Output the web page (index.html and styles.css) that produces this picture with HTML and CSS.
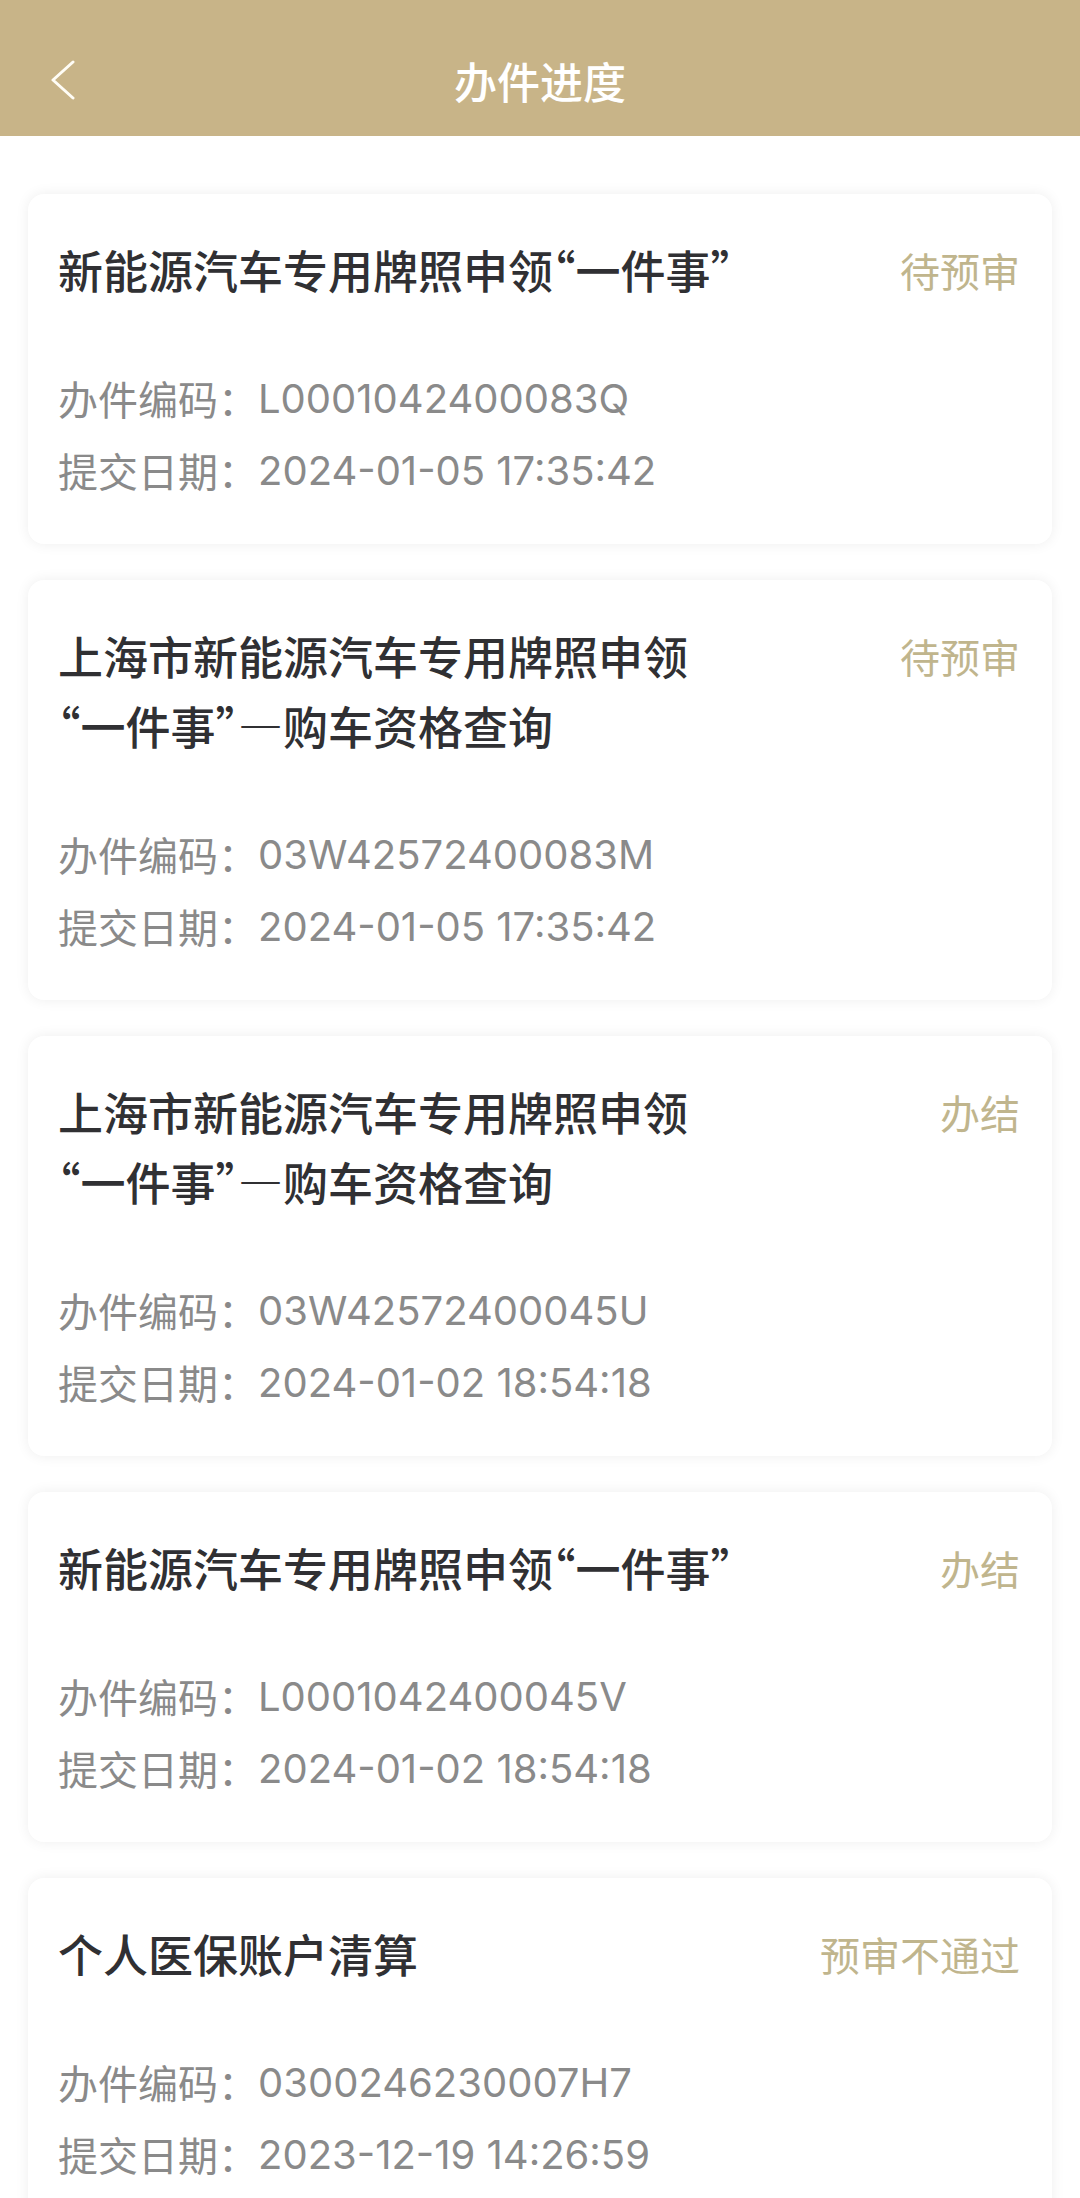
FILE: index.html
```html
<!DOCTYPE html>
<html lang="zh-CN">
<head>
<meta charset="utf-8">
<title>办件进度</title>
<link rel="stylesheet" href="styles.css">
</head>
<body>
<header class="nav">
  <div class="nav-left">
    <button class="back" aria-label="返回">
      <svg width="26" height="40" viewBox="0 0 26 40"><path d="M23 2 L3 20 L23 38" fill="none" stroke="#fffdf6" stroke-width="3" stroke-linecap="round" stroke-linejoin="round"/></svg>
    </button>
  </div>
  <h1 class="nav-title">办件进度</h1>
  <div class="nav-right"></div>
</header>
<main class="list">
  <article class="card">
    <div class="card-head">
      <h2 class="title">新能源汽车专用牌照申领“一件事”</h2>
      <span class="status">待预审</span>
    </div>
    <div class="info">
      <p><span class="label">办件编码：</span><span class="val">L0001042400083Q</span></p>
      <p><span class="label">提交日期：</span><span class="val">2024-01-05 17:35:42</span></p>
    </div>
  </article>
  <article class="card">
    <div class="card-head">
      <h2 class="title">上海市新能源汽车专用牌照申领“一件事”—购车资格查询</h2>
      <span class="status">待预审</span>
    </div>
    <div class="info">
      <p><span class="label">办件编码：</span><span class="val">03W42572400083M</span></p>
      <p><span class="label">提交日期：</span><span class="val">2024-01-05 17:35:42</span></p>
    </div>
  </article>
  <article class="card">
    <div class="card-head">
      <h2 class="title">上海市新能源汽车专用牌照申领“一件事”—购车资格查询</h2>
      <span class="status">办结</span>
    </div>
    <div class="info">
      <p><span class="label">办件编码：</span><span class="val">03W42572400045U</span></p>
      <p><span class="label">提交日期：</span><span class="val">2024-01-02 18:54:18</span></p>
    </div>
  </article>
  <article class="card">
    <div class="card-head">
      <h2 class="title">新能源汽车专用牌照申领“一件事”</h2>
      <span class="status">办结</span>
    </div>
    <div class="info">
      <p><span class="label">办件编码：</span><span class="val">L0001042400045V</span></p>
      <p><span class="label">提交日期：</span><span class="val">2024-01-02 18:54:18</span></p>
    </div>
  </article>
  <article class="card">
    <div class="card-head">
      <h2 class="title">个人医保账户清算</h2>
      <span class="status">预审不通过</span>
    </div>
    <div class="info">
      <p><span class="label">办件编码：</span><span class="val">0300246230007H7</span></p>
      <p><span class="label">提交日期：</span><span class="val">2023-12-19 14:26:59</span></p>
    </div>
  </article>
</main>
</body>
</html>
```
FILE: styles.css
```css
* { box-sizing: border-box; }
html, body { margin: 0; padding: 0; background: #ffffff; }
body {
  font-family: "Noto Sans CJK SC", "Noto Sans", sans-serif;
  width: 1080px;
}
.nav {
  height: 136px;
  padding-top: 24px;
  background: #c8b488;
  display: grid;
  grid-template-columns: 1fr auto 1fr;
  align-items: center;
}
.nav-left { display: flex; align-items: center; padding-left: 50px; }
.back {
  border: 0; background: none; padding: 0; margin: 0;
  width: 26px; height: 40px; display: block;
}
.back svg { display: block; }
.nav-title {
  margin: 0;
  font-size: 43px;
  font-weight: 500;
  color: #ffffff;
  line-height: 60px;
}
.list {
  padding: 58px 28px 0;
  display: flex;
  flex-direction: column;
  gap: 36px;
}
.card {
  background: #fff;
  border-radius: 16px;
  box-shadow: 0 0 14px rgba(0, 0, 0, 0.07);
  padding: 41px 32px 38px 30px;
}
.card-head {
  display: flex;
  justify-content: space-between;
  align-items: flex-start;
}
.title {
  margin: 0;
  max-width: 686px;
  font-size: 45px;
  line-height: 70px;
  font-weight: 500;
  color: #303033;
  font-feature-settings: "halt";
}
.status {
  font-size: 40px;
  line-height: 70px;
  color: #c0b58d;
  white-space: nowrap;
}
.info { margin-top: 57px; }
.info p {
  margin: 0;
  height: 72px;
  display: flex;
  align-items: center;
  font-size: 40px;
  color: #8a8a8a;
}
.val {
  font-family: "Inter", "Noto Sans", sans-serif;
  letter-spacing: 0;
}
```
